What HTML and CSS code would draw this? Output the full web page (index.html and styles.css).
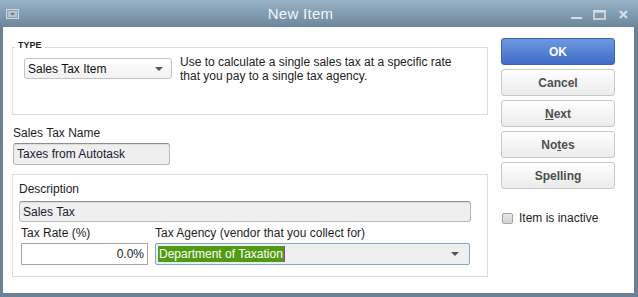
FILE: index.html
```html
<!DOCTYPE html>
<html lang="en">
<head>
    <meta charset="UTF-8">
    <meta name="viewport" content="width=device-width, initial-scale=1.0">
    <title>New Item</title>
    <link rel="stylesheet" href="styles.css">
</head>
<body>

    <div class="window">
        <!-- Title bar -->
        <div class="titlebar">
            <svg class="sys-icon" width="13" height="10" viewBox="0 0 13 10">
                <rect x="0.5" y="0.5" width="12" height="9" fill="#8ea3b5" stroke="#cfd6dc"/>
                <rect x="2" y="2" width="9" height="6" fill="#b7c4cf"/>
                <path d="M4 4 L9 4 L6.5 6.5 Z" fill="#5f7587"/>
            </svg>
            <div class="title">New Item</div>
            <svg class="controls" width="68" height="27" viewBox="0 0 68 27">
                <rect x="5" y="17" width="11" height="2" fill="#d9dee3"/>
                <rect x="28" y="11" width="11" height="8" fill="none" stroke="#d9dee3" stroke-width="1.6"/>
                <rect x="27.2" y="10.2" width="12.6" height="2.4" fill="#d9dee3"/>
                <path d="M54 11 L61 18 M61 11 L54 18" stroke="#d9dee3" stroke-width="2.2"/>
            </svg>
        </div>

        <div class="client">
            <div class="left-col">
                <div class="group-label">TYPE</div>
                <div class="type-box">
                    <div class="select">
                        <span>Sales Tax Item</span>
                        <span class="arrow"></span>
                    </div>
                    <p class="type-help">Use to calculate a single sales tax at a specific rate<br>that you pay to a single tax agency.</p>
                </div>

                <div class="field-label name-label">Sales Tax Name</div>
                <div class="textbox name-box">Taxes from Autotask</div>

                <div class="desc-box">
                    <div class="field-label">Description</div>
                    <div class="textbox desc-input">Sales Tax</div>
                    <div class="tax-row">
                        <div class="rate-col">
                            <div class="field-label">Tax Rate (%)</div>
                            <div class="rate-input">0.0%</div>
                        </div>
                        <div class="agency-col">
                            <div class="field-label">Tax Agency (vendor that you collect for)</div>
                            <div class="agency-select">
                                <span class="selected-text">Department of Taxation</span>
                                <span class="arrow"></span>
                            </div>
                        </div>
                    </div>
                </div>
            </div>

            <div class="right-col">
                <button class="btn btn-primary">OK</button>
                <button class="btn">Cancel</button>
                <button class="btn"><u>N</u>ext</button>
                <button class="btn">No<u>t</u>es</button>
                <button class="btn">Spellin<u>g</u></button>
                <label class="check">
                    <span class="checkbox"></span>
                    Item is inactive
                </label>
            </div>
        </div>
    </div>

</body>
</html>
```

FILE: styles.css
```css
body {
    margin: 0;
    font-family: "Liberation Sans", Arial, sans-serif;
    font-size: 12px;
    color: #1e1e1e;
    background-color: #ffffff;
}

.window {
    width: 638px;
    height: 297px;
    display: flex;
    flex-direction: column;
}

.titlebar {
    height: 27px;
    display: flex;
    align-items: center;
    background: linear-gradient(to bottom, #98b2c8, #6c869a);
}

.sys-icon {
    margin-left: 6px;
}

.title {
    flex: 1;
    text-align: center;
    padding-left: 16px;
    color: #f4f6f8;
    font-size: 15px;
    letter-spacing: 0.3px;
}

.controls {
    margin-right: 4px;
}

.client {
    flex: 1;
    display: flex;
    gap: 13px;
    background: #ffffff;
    border-left: 3px solid #6b8296;
    border-right: 4px solid #6b8296;
    border-bottom: 4px solid #6b8296;
    padding: 11px 0 0 9px;
}

.left-col {
    width: 476px;
    padding-top: 2px;
}

.group-label {
    position: relative;
    width: fit-content;
    margin-left: 3px;
    margin-bottom: -3px;
    padding: 0 3px;
    background: #ffffff;
    font-size: 9px;
    line-height: 10px;
    font-weight: bold;
    color: #222;
}

.type-box {
    height: 68px;
    box-sizing: border-box;
    border: 1px solid #dcdcdc;
    padding: 10px 0 0 11px;
    display: flex;
    align-items: flex-start;
}

.select {
    width: 148px;
    height: 21px;
    box-sizing: border-box;
    border: 1px solid #c3c3c3;
    border-radius: 3px;
    background: linear-gradient(to bottom, #ffffff, #f1f1f1);
    display: flex;
    align-items: center;
    justify-content: space-between;
    padding: 0 8px 0 3px;
    color: #111;
}

.arrow {
    width: 0;
    height: 0;
    border-left: 4px solid transparent;
    border-right: 4px solid transparent;
    border-top: 4px solid #555;
}

.type-help {
    margin: -3px 0 0 8px;
    line-height: 14px;
    color: #222;
}

.field-label {
    line-height: 14px;
    color: #1e1e1e;
}

.name-label {
    margin: 11px 0 3px 1px;
}

.textbox {
    box-sizing: border-box;
    background: #efefef;
    border: 1px solid #b9b9b9;
    border-top-color: #8e8e8e;
    border-radius: 3px;
    box-shadow: inset 0 1px 1px rgba(0, 0, 0, 0.08);
    display: flex;
    align-items: center;
    padding-left: 3px;
    color: #1a1a33;
}

.name-box {
    width: 157px;
    height: 22px;
    margin-left: 1px;
}

.desc-box {
    margin-top: 9px;
    height: 103px;
    box-sizing: border-box;
    border: 1px solid #dcdcdc;
    padding: 7px 0 0 6px;
}

.desc-box > .field-label {
    margin-bottom: 5px;
}

.desc-input {
    width: 452px;
    height: 21px;
}

.tax-row {
    display: flex;
    gap: 7px;
    margin-top: 4px;
    padding-left: 2px;
}

.rate-col {
    width: 127px;
}

.agency-col {
    width: 315px;
}

.tax-row .field-label {
    margin-bottom: 3px;
}

.rate-input {
    height: 22px;
    box-sizing: border-box;
    border: 1px solid #a6a6a6;
    background: #ffffff;
    display: flex;
    align-items: center;
    justify-content: flex-end;
    padding-right: 3px;
    color: #222;
}

.agency-select {
    height: 22px;
    box-sizing: border-box;
    border: 1px solid #7fa3dc;
    border-radius: 2px;
    background: #efefef;
    display: flex;
    align-items: center;
    justify-content: space-between;
    padding: 0 10px 0 2px;
}

.selected-text {
    background: #4f9c12;
    color: #ffffff;
    padding: 1px;
    line-height: 14px;
    border-right: 1px solid #8a3fd0;
}

.right-col {
    width: 114px;
    display: flex;
    flex-direction: column;
    gap: 4px;
}

.btn {
    height: 27px;
    box-sizing: border-box;
    border: 1px solid #c9c9c9;
    border-radius: 3px;
    background: linear-gradient(to bottom, #ffffff, #ebebeb);
    font-family: "Liberation Sans", Arial, sans-serif;
    font-size: 12px;
    font-weight: bold;
    color: #4e4e4e;
    padding: 0;
}

.btn-primary {
    border-color: #3c63b3;
    background: linear-gradient(to bottom, #6e99df, #3f6cc7);
    color: #ffffff;
}

.check {
    display: flex;
    align-items: center;
    gap: 6px;
    margin-top: 18px;
    margin-left: 1px;
    color: #1e1e1e;
}

.checkbox {
    width: 11px;
    height: 11px;
    box-sizing: border-box;
    border: 1px solid #a5a5a5;
    border-radius: 2px;
    background: linear-gradient(to bottom, #e6e6e6, #d4d4d4);
}
```
